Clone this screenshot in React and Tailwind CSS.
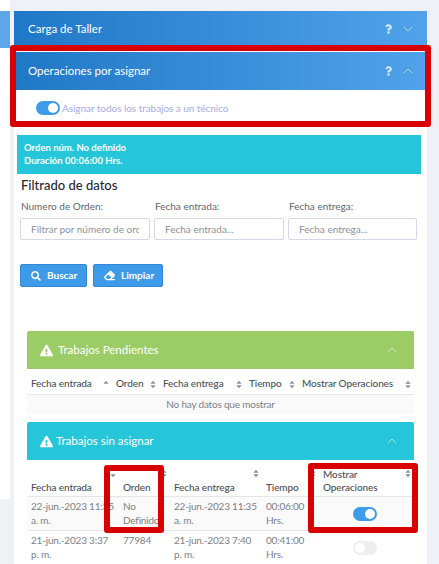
import React from "react";
import { FaExclamationTriangle, FaSearch, FaEraser, FaQuestion } from "react-icons/fa";
import { ChevronDown, ChevronUp } from "lucide-react";

function Sort({ dir, st }) {
  return (
    <svg viewBox="0 0 8 12" className="absolute right-[3px] w-[6px] h-[9px] text-[#8a8f98]" style={{ top: st }}>
      {dir !== "down" && <path d="M4 1 L7.5 5 H0.5 Z" fill="currentColor" />}
      {dir !== "up" && <path d="M4 11 L7.5 7 H0.5 Z" fill="currentColor" />}
    </svg>
  );
}

function Toggle({ on }) {
  return (
    <span className={`inline-flex w-6 h-[14px] rounded-full items-center p-[2px] shrink-0 ${on ? "bg-[#3d9be9] justify-end" : "bg-[#eeeeee] justify-start"}`}>
      <span className="w-[10px] h-[10px] rounded-full bg-white" />
    </span>
  );
}

function PanelHead({ title, open, lift }) {
  const Chev = open ? ChevronUp : ChevronDown;
  return (
    <div className={`flex items-center justify-between h-full pl-[14px] pr-[11px] bg-linear-to-r from-[#1f78c6] to-[#50a2ea] text-white ${lift ? "pb-[2px]" : ""}`}>
      <span className="text-[11.5px] font-normal">{title}</span>
      <span className="flex items-center gap-[8px]">
        <FaQuestion className="w-[7px] h-[10px] text-[#d6e8f9]" />
        <Chev className="w-[16px] h-[16px] text-[#c4def7]" strokeWidth={1.25} />
      </span>
    </div>
  );
}

function CardHead({ title, color, gap }) {
  return (
    <div className={`flex items-center justify-between h-[38px] pl-[13px] pr-[14px] rounded-t-[2px] text-white ${color}`}>
      <span className={`flex items-center ${gap}`}>
        <FaExclamationTriangle className="w-[13px] h-[13px]" />
        <span className="text-[11.5px]">{title}</span>
      </span>
      <ChevronUp className="w-[16px] h-[16px] text-white/70" strokeWidth={1.25} />
    </div>
  );
}

function Th({ children, w, dir, st, tall }) {
  return (
    <th
      className={`relative pl-[4px] pr-[2px] text-left align-bottom font-medium text-[10px] tracking-[-0.1px] leading-[13px] text-[#4a4f57] border-b border-[#e4e6ea] ${tall ? "pt-[8px] pb-[2px]" : "pt-[6px] pb-[4px]"}`}
      style={{ width: w }}
    >
      {children}
      <Sort dir={dir} st={st} />
    </th>
  );
}

function Td({ children }) {
  return (
    <td className="pl-[4px] pr-[1px] pt-[3px] pb-[3px] align-top text-[10px] tracking-[-0.2px] leading-[13.5px] text-[#7b7f86] border-b border-[#e4e6ea]">
      {children}
    </td>
  );
}

function ToggleCell({ on }) {
  return (
    <td className="border-b border-[#e4e6ea] pr-[3px]">
      <div className="flex justify-center"><Toggle on={on} /></div>
    </td>
  );
}

export default function App() {
  return (
    <div className="relative w-[439px] h-[564px] overflow-hidden bg-[#eff1f6] flex" style={{ fontFamily: '"Lato", "Noto Sans", sans-serif' }}>
      <div className="w-[10px] h-[499px] bg-white rounded-br-[3px] pt-[11px] shrink-0">
        <div className="h-[37px] bg-[#5da6ea]" />
      </div>

      <div className="ml-[4px] w-[413px] shrink-0 flex flex-col">
        <div className="h-[11px] bg-[#eff1f6]" />
        <div className="h-[37px]"><PanelHead title="Carga de Taller" lift /></div>
        <div className="h-[3px] bg-[#eff1f6]" />
        <div className="bg-white h-[1px]" />
        <div className="h-[38px]"><PanelHead title="Operaciones por asignar" open /></div>

        <div className="bg-white flex-1 min-h-0 overflow-hidden">
          <div className="h-[31px] pt-[5px] flex items-center pl-[22px] gap-[2px]">
            <Toggle on />
            <span className="text-[10px] tracking-[-0.05px] text-[#a8ace6]">Asignar todos los trabajos a un técnico</span>
          </div>

          <div className="h-[14px]" />

          <div className="ml-[3px] w-[404px] h-[39px] bg-[#26c6da] pl-[7px] pt-[6px] text-white text-[9.5px] font-bold leading-[13px]">
            <div>Orden núm. No definido</div>
            <div>Duración 00:06:00 Hrs.</div>
          </div>

          <div className="pl-[6px] pr-[10px]">
            <h2 className="pl-[1px] mt-[2px] text-[13px] leading-[18px] font-medium text-[#1f2733]">Filtrado de datos</h2>

            <div className="mt-[6px] grid grid-cols-[130px_130px_129px] gap-x-[4px]">
              {[
                ["Numero de Orden:", "Filtrar por número de orden"],
                ["Fecha entrada:", "Fecha entrada..."],
                ["Fecha entrega:", "Fecha entrega..."],
              ].map(([l, p]) => (
                <label key={l} className="block">
                  <span className="block pl-[1px] text-[10px] leading-[13px] text-[#5f6670]">{l}</span>
                  <input
                    placeholder={p}
                    readOnly
                    className="mt-[5px] w-full h-[22px] px-[10px] bg-white border border-[#d3d9e8] rounded-[2px] text-[10px] placeholder:text-[#8d9199] outline-none"
                  />
                </label>
              ))}
            </div>

            <div className="mt-[24px] flex gap-[6px]">
              <button className="flex items-center gap-[6px] w-[67px] h-[23px] pl-[10px] bg-[#3d9be9] border border-[#2f88d8] rounded-[2px] text-white text-[10px] font-bold">
                <FaSearch className="w-[10px] h-[10px]" /> Buscar
              </button>
              <button className="flex items-center gap-[6px] w-[70px] h-[23px] pl-[10px] bg-[#3d9be9] border border-[#2f88d8] rounded-[2px] text-white text-[10px] font-bold">
                <FaEraser className="w-[11px] h-[11px]" /> Limpiar
              </button>
            </div>

            <div className="mt-[44px] ml-[7px] w-[387px]">
              <CardHead title="Trabajos Pendientes" color="bg-[#9ccc65]" gap="gap-[5px]" />
              <table className="w-full table-fixed border-collapse">
                <thead>
                  <tr className="h-[25px]">
                    <Th w="85px" dir="up" st="11px">Fecha entrada</Th>
                    <Th w="47px" st="11px">Orden</Th>
                    <Th w="86px" st="11px">Fecha entrega</Th>
                    <Th w="53px" st="11px">Tiempo</Th>
                    <Th w="116px" st="11px">Mostrar Operaciones</Th>
                  </tr>
                </thead>
                <tbody>
                  <tr className="bg-[#fafafa]">
                    <td colSpan={5} className="h-[20px] text-center text-[10px] tracking-[-0.2px] text-[#7b7f86]">No hay datos que mostrar</td>
                  </tr>
                </tbody>
              </table>

              <div className="mt-[8px]">
                <CardHead title="Trabajos sin asignar" color="bg-[#26c6da]" gap="gap-[3px]" />
              </div>
              <table className="w-full table-fixed border-collapse">
                <thead>
                  <tr>
                    <Th tall w="92px" dir="down" st="9px">Fecha entrada</Th>
                    <Th tall w="51px" st="9px">Orden</Th>
                    <Th tall w="92px" st="9px">Fecha entrega</Th>
                    <Th tall w="57px" st="9px">Tiempo</Th>
                    <Th tall w="95px" st="9px">Mostrar<br />Operaciones</Th>
                  </tr>
                </thead>
                <tbody>
                  <tr className="bg-[#fafafa]">
                    <Td><span className="whitespace-nowrap">22-jun.-2023 11:35</span><br />a. m.</Td>
                    <Td>No<br />Definido</Td>
                    <Td><span className="whitespace-nowrap">22-jun.-2023 11:35</span><br />a. m.</Td>
                    <Td>00:06:00<br />Hrs.</Td>
                    <ToggleCell on />
                  </tr>
                  <tr>
                    <Td>21-jun.-2023 3:37<br />p. m.</Td>
                    <Td>77984</Td>
                    <Td>21-jun.-2023 7:40<br />p. m.</Td>
                    <Td>00:41:00<br />Hrs.</Td>
                    <ToggleCell />
                  </tr>
                </tbody>
              </table>
            </div>
          </div>
        </div>
      </div>

      <div className="absolute left-[10px] top-[45px] w-[421px] h-[82px] border-[6px] border-[#d80000] rounded-[3px] pointer-events-none" />
      <div className="absolute left-[104px] top-[465px] w-[60px] h-[68px] border-[6px] border-[#d80000] rounded-[3px] pointer-events-none" />
      <div className="absolute left-[308px] top-[463px] w-[110px] h-[70px] border-[6px] border-[#d80000] rounded-[3px] pointer-events-none" />
    </div>
  );
}
